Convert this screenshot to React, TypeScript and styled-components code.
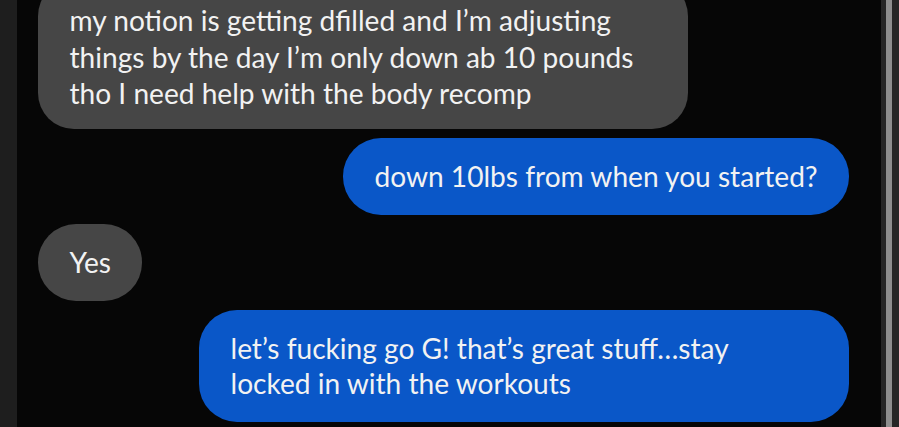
import styled, { createGlobalStyle } from "styled-components";

const GlobalStyle = createGlobalStyle`
  html, body {
    margin: 0;
    padding: 0;
    background: #060606;
  }
  body {
    font-family: Lato, "Noto Sans", sans-serif;
    -webkit-font-smoothing: antialiased;
  }
`

const Screen = styled.div`
  display: flex;
  width: 899px;
  height: 427px;
  overflow: hidden;
  background: #060606;
`

const LeftRail = styled.div`
  flex: 0 0 17px;
  background: #1e1e1e;
`

const Thread = styled.div`
  flex: 1;
  display: flex;
  flex-direction: column;
  row-gap: 9px;
  padding: 0 32px 0 21px;
  min-width: 0;
`

const RightRail = styled.div`
  flex: 0 0 18px;
  display: flex;
  background: #262626;
`

const ScrollLine = styled.div`
  margin-left: 5px;
  width: 6px;
  background: #8e8e8e;
`

const Row = styled.div<{ $mine?: boolean }>`
  display: flex;
  justify-content: ${p => p.$mine ? "flex-end" : "flex-start"};
`

const Bubble = styled.div<{ $mine?: boolean; $wide?: boolean }>`
  box-sizing: border-box;
  width: ${p => p.$wide ? "650px" : "fit-content"};
  padding: 21px 31.5px;
  border-radius: 38px;
  background: ${p => p.$mine ? "#0a57c8" : "#464646"};
  color: #f2f2f2;
  font-size: 28.1px;
  line-height: 35px;
  white-space: nowrap;
`

const FirstBubble = styled(Bubble)`
  margin-top: -20px;
  padding-top: 22px;
  padding-bottom: 17px;
  border-radius: 36px;
  line-height: 36.5px;
`

const App = () => {
  return (
    <>
      <GlobalStyle />
      <Screen>
        <LeftRail />
        <Thread>
          <Row>
            <FirstBubble $wide>
              my notion is getting dfilled and I’m adjusting<br />
              things by the day I’m only down ab 10 pounds<br />
              tho I need help with the body recomp
            </FirstBubble>
          </Row>
          <Row $mine>
            <Bubble $mine>down 10lbs from when you started?</Bubble>
          </Row>
          <Row>
            <Bubble>Yes</Bubble>
          </Row>
          <Row $mine>
            <Bubble $mine $wide>
              let’s fucking go G! that’s great stuff…stay<br />
              locked in with the workouts
            </Bubble>
          </Row>
        </Thread>
        <RightRail>
          <ScrollLine />
        </RightRail>
      </Screen>
    </>
  )
}

export default App
